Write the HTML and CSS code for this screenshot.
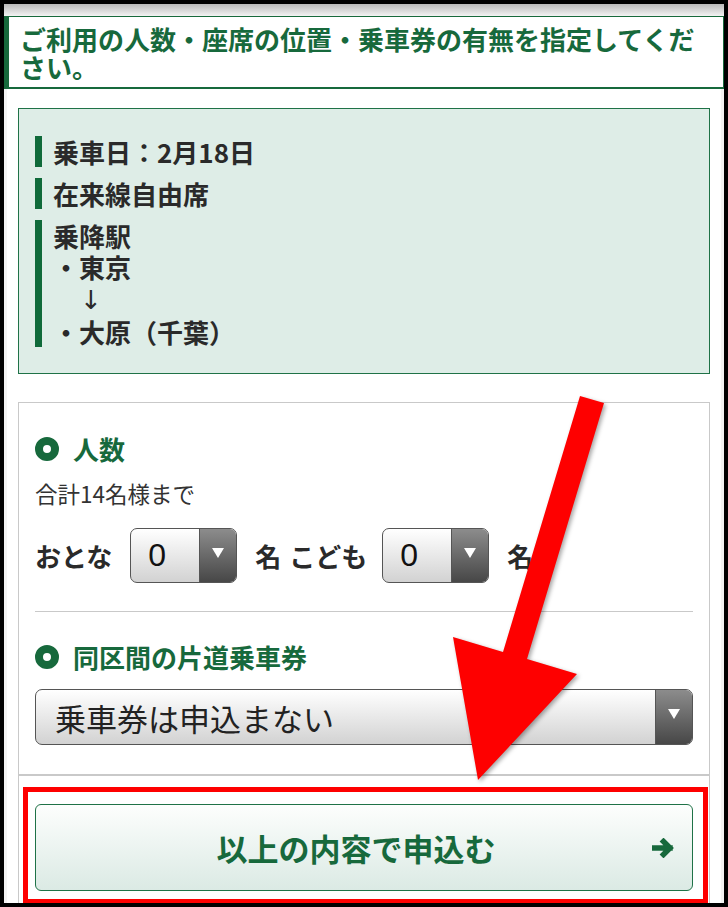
FILE: index.html
```html
<!DOCTYPE html>
<html lang="ja">
<head>
    <meta charset="UTF-8">
    <meta name="viewport" content="width=device-width, initial-scale=1.0">
    <title>人数・座席の指定</title>
    <link rel="stylesheet" href="styles.css">
</head>

<body>
    <div class="screen">
        <div class="status-shade"></div>
        <h1 class="page-title">ご利用の人数・座席の位置・乗車券の有無を指定してください。</h1>
        <main class="content">
            <section class="summary">
                <p class="summary-item">乗車日：2月18日</p>
                <p class="summary-item">在来線自由席</p>
                <p class="summary-item">
                    乗降駅<br>
                    ・東京<br>
                    <span class="down-arrow">↓</span><br>
                    ・大原（千葉）
                </p>
            </section>

            <section class="form-panel">
                <div class="form-block">
                    <h2 class="block-title"><span class="dot"></span>人数</h2>
                    <p class="note">合計14名様まで</p>
                    <div class="count-row">
                        <span class="count-label">おとな</span>
                        <div class="select select-small">
                            <span class="select-value num">0</span>
                            <span class="select-caret"></span>
                        </div>
                        <span class="count-unit">名</span>
                        <span class="count-label">こども</span>
                        <div class="select select-small">
                            <span class="select-value num">0</span>
                            <span class="select-caret"></span>
                        </div>
                        <span class="count-unit">名</span>
                    </div>
                </div>

                <div class="form-block last">
                    <h2 class="block-title"><span class="dot"></span>同区間の片道乗車券</h2>
                    <div class="select select-wide">
                        <span class="select-value">乗車券は申込まない</span>
                        <span class="select-caret"></span>
                    </div>
                </div>

                <div class="submit-area">
                    <div class="highlight">
                        <button class="submit" type="button">
                            <span></span>
                            <span class="submit-text">以上の内容で申込む</span>
                            <svg class="submit-icon" width="24" height="20" viewBox="0 0 24 20">
                                <path d="M2 10 H18 M11.5 3.5 L18 10 L11.5 16.5" fill="none" stroke="#17693c" stroke-width="5.5" stroke-linecap="square" stroke-linejoin="miter"/>
                            </svg>
                        </button>
                    </div>
                </div>
            </section>
        </main>
    </div>

    <!-- Annotation arrow drawn over the page -->
    <svg class="callout-arrow" width="728" height="907" viewBox="0 0 728 907">
        <polygon points="580,396 604,403 527,659 577,674 478,780 453,637 503,652" fill="#fe0000"/>
    </svg>
</body>
</html>
```

FILE: styles.css
```css
body {
    margin: 0;
    background: #000;
    font-family: "Noto Sans CJK JP", sans-serif;
    color: #2a2a2a;
    position: relative;
    height: 907px;
    overflow: hidden;
}

.screen {
    margin: 4px 4px 0;
    height: 899px;
    background: #f3f3f3;
    overflow: hidden;
}

.status-shade {
    height: 12px;
    background: linear-gradient(#b9b9b9, #f3f3f3);
}

.page-title {
    margin: 0;
    background: #fff;
    border-top: 1px solid #17693c;
    border-bottom: 2px solid #17693c;
    border-left: 5px solid #17693c;
    border-right: 1px solid #17693c;
    padding: 8px 20px 6px 11px;
    font-size: 26px;
    line-height: 28px;
    font-weight: bold;
    color: #17693c;
}

.content {
    background: #fff;
    margin: 0 3px;
    padding: 19px 11px 0;
    height: 800px;
}

/* 乗車情報 */
.summary {
    background: #deede7;
    border: 1px solid #1f7247;
    padding: 27px 16px 15px;
}

.summary-item {
    margin: 0 0 11px;
    border-left: 7px solid #0f6a3a;
    padding-left: 11px;
    font-size: 26px;
    line-height: 31px;
    font-weight: bold;
}

.down-arrow {
    padding-left: 27px;
    font-family: "DejaVu Sans", sans-serif;
    font-weight: normal;
}

/* フォーム */
.form-panel {
    margin-top: 28px;
    border: 1px solid #c9c9c9;
    border-bottom: none;
    height: 600px;
}

.form-block {
    margin: 0 16px;
    padding: 31px 0 28px;
    border-bottom: 1px solid #c9c9c9;
}

.form-block.last {
    margin: 0;
    padding: 30px 16px 29px;
}

.block-title {
    margin: 0;
    display: flex;
    align-items: center;
    gap: 14px;
    font-size: 26px;
    line-height: 30px;
    color: #17693c;
}

.dot {
    width: 8px;
    height: 8px;
    border: 8px solid #17693c;
    border-radius: 50%;
    background: #fff;
}

.note {
    margin: 15px 0 0;
    font-size: 22.5px;
    line-height: 28px;
    color: #333;
}

.count-row {
    margin-top: 21px;
    display: flex;
    align-items: center;
    font-size: 26px;
    font-weight: bold;
}

.count-label {
    margin-right: 18px;
}

.count-unit {
    margin: 0 8px 0 18px;
}

.count-unit + .count-label {
    margin-right: 15px;
}

.select {
    display: flex;
    border: 1px solid #555;
    border-radius: 7px;
    overflow: hidden;
    background: linear-gradient(#ffffff, #d2d2d2);
    box-sizing: border-box;
}

.select-small {
    width: 107px;
    height: 55px;
}

.select-wide {
    margin-top: 17px;
    height: 56px;
}

.select-value {
    flex: 1;
    display: flex;
    align-items: center;
    padding-left: 19px;
    font-size: 31px;
    font-weight: normal;
    color: #222;
    border-right: 1px solid #555;
}

.select-value.num {
    padding-left: 17px;
    font-family: "Liberation Sans", Arial, sans-serif;
    font-size: 32px;
    color: #111;
}

.select-caret {
    width: 36px;
    background: linear-gradient(#8c8c8c, #474747);
    display: flex;
    align-items: center;
    justify-content: center;
}

.select-caret::after {
    content: "";
    margin-top: -6px;
    border-left: 6px solid transparent;
    border-right: 6px solid transparent;
    border-top: 10px solid #fff;
}

/* 申込ボタン */
.submit-area {
    border-top: 1px solid #c9c9c9;
    padding-top: 11px;
}

.highlight {
    margin: 0 1px 0 4px;
    border: 5px solid #fe0000;
    padding: 12px 10px 8px 7px;
}

.submit {
    width: 100%;
    height: 87px;
    display: grid;
    grid-template-columns: 1fr auto 1fr;
    align-items: center;
    border: 1px solid #1f7247;
    border-radius: 6px;
    background: linear-gradient(#fdfefd, #dbeae4);
    padding: 0 16px 0 0;
    font-family: "Noto Sans CJK JP", sans-serif;
    cursor: pointer;
}

.submit-text {
    font-size: 31px;
    font-weight: bold;
    color: #17693c;
}

.submit-icon {
    justify-self: end;
}

.callout-arrow {
    position: absolute;
    left: 0;
    top: 0;
    pointer-events: none;
    filter: drop-shadow(2px 2px 2px rgba(0, 0, 0, 0.35));
}
```
